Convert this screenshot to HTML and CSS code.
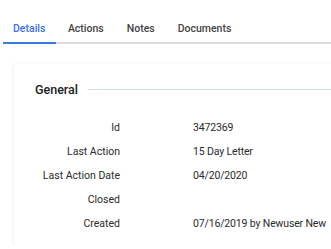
FILE: index.html
```html
<!DOCTYPE html>
<html>
<head>
<meta charset="utf-8">
<link rel="stylesheet" href="styles.css">
</head>
<body>
<nav class="tabs">
  <a class="tab active">Details</a>
  <a class="tab">Actions</a>
  <a class="tab">Notes</a>
  <a class="tab">Documents</a>
  <span class="tab-rest"></span>
</nav>
<section class="card">
  <div class="section-head">
    <h2 class="section-title">General</h2>
    <span class="section-line"></span>
  </div>
  <dl class="fields">
    <dt>Id</dt><dd>3472369</dd>
    <dt>Last Action</dt><dd>15 Day Letter</dd>
    <dt>Last Action Date</dt><dd>04/20/2020</dd>
    <dt>Closed</dt><dd></dd>
    <dt>Created</dt><dd>07/16/2019 by Newuser New</dd>
  </dl>
</section>
</body>
</html>
```
FILE: styles.css
```css
html, body {
  margin: 0;
  padding: 0;
  overflow: hidden;
  background: #fff;
  font-family: Roboto, "Noto Sans", sans-serif;
  color: #2b2b2b;
}
.tabs {
  display: flex;
  align-items: stretch;
  padding: 12px 0 0 3px;
}
.tab {
  font-size: 10.5px;
  font-weight: 500;
  color: #444;
  padding: 10px 11.5px 7px;
  border-bottom: 2px solid #dcdcdc;
  line-height: 13px;
}
.tab.active {
  color: #3a6ee8;
  border-bottom-color: #3a7be0;
  padding: 10px 11px 7px 10px;
}
.tab-rest {
  flex: 1;
  border-bottom: 2px solid #dcdcdc;
}
.card {
  margin: 20px 0 0 14px;
  width: 360px;
  background: #fff;
  border-radius: 4px;
  box-shadow: 0 1px 5px rgba(0,0,0,0.09);
  padding: 16px 0 9px 21px;
  box-sizing: border-box;
}
.section-head {
  display: flex;
  align-items: center;
  gap: 10px;
  height: 18px;
}
.section-title {
  margin: 0;
  font-size: 12.5px;
  font-weight: 500;
  color: #222;
}
.section-line {
  flex: 1;
  height: 1px;
  background: #cfdff5;
}
.fields {
  display: grid;
  grid-template-columns: 85px 1fr;
  column-gap: 73px;
  margin: 18px 0 0 0;
  font-size: 10.5px;
}
.fields dt, .fields dd {
  margin: 0;
  height: 24px;
  line-height: 24px;
  color: #2b2b2b;
}
.fields dd {
  letter-spacing: -0.15px;
}
.fields dt {
  text-align: right;
}
```
